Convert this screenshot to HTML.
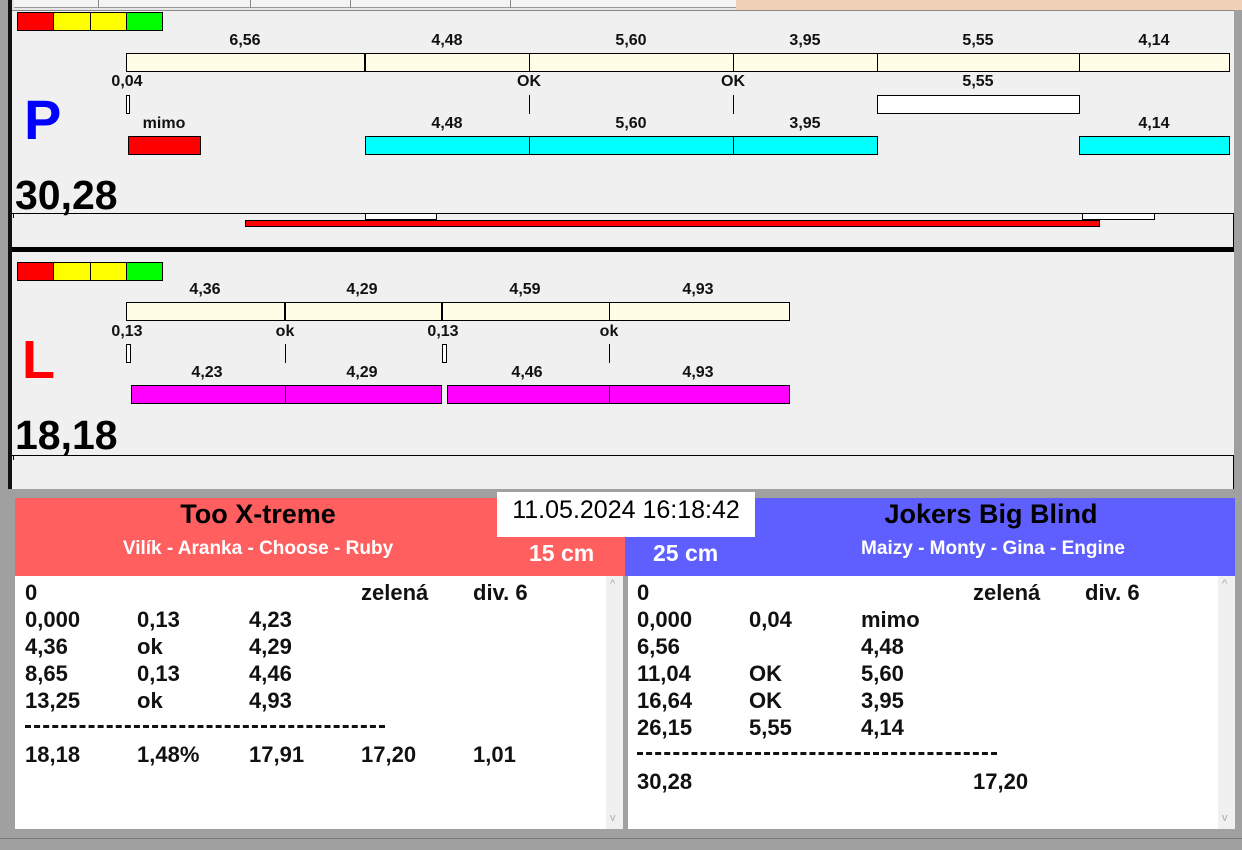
<!DOCTYPE html><html><head><meta charset="utf-8"><style>
*{margin:0;padding:0;box-sizing:border-box}
body{width:1242px;height:850px;background:#f0f0f0;position:relative;overflow:hidden;font-family:"Liberation Sans",sans-serif}
div{position:absolute}
.l{font-weight:bold;font-size:16px;line-height:15px;transform:translateX(-50%);white-space:nowrap;color:#111}
.b{border:1px solid #000}
.cr{background:#fffde6}
.cy{background:#00ffff}
.mg{background:#ff00ff}
.v{width:1px;background:#000}
.t{font-family:"Liberation Sans Narrow","Liberation Sans",sans-serif;font-weight:bold;font-size:22px;line-height:27px;color:#111;white-space:nowrap}
.big{font-weight:bold;font-size:41px;line-height:40px;color:#000}
</style></head><body>
<div style="left:0;top:0;width:1242px;height:10px;background:#e6e6e6"></div>
<div style="left:14px;top:0;width:722px;height:8px;background:#f4f4f4;border-bottom:1px solid #999"></div>
<div style="left:98px;top:0;width:1px;height:8px;background:#888"></div>
<div style="left:250px;top:0;width:1px;height:8px;background:#888"></div>
<div style="left:350px;top:0;width:1px;height:8px;background:#888"></div>
<div style="left:510px;top:0;width:1px;height:8px;background:#888"></div>
<div style="left:736px;top:0;width:506px;height:11px;background:#f0d0b6"></div>
<div style="left:0;top:0;width:12px;height:850px;background:#a0a0a0"></div>
<div style="left:8px;top:0;width:4px;height:492px;background:#111"></div>
<div style="left:1234px;top:10px;width:8px;height:480px;background:#a0a0a0"></div>
<div style="left:12px;top:10px;width:1222px;height:1px;background:#888"></div>

<div class="b" style="left:17px;top:12px;width:37px;height:19px;background:#f00"></div>
<div class="b" style="left:53px;top:12px;width:38px;height:19px;background:#ff0"></div>
<div class="b" style="left:90px;top:12px;width:37px;height:19px;background:#ff0"></div>
<div class="b" style="left:126px;top:12px;width:37px;height:19px;background:#0f0"></div>

<div class="l" style="left:245px;top:33px">6,56</div>
<div class="l" style="left:447px;top:33px">4,48</div>
<div class="l" style="left:631px;top:33px">5,60</div>
<div class="l" style="left:805px;top:33px">3,95</div>
<div class="l" style="left:978px;top:33px">5,55</div>
<div class="l" style="left:1154px;top:33px">4,14</div>
<div class="b cr" style="left:126px;top:53px;width:1104px;height:19px"></div>
<div style="left:364px;top:53px;width:2px;height:19px;background:#000"></div>
<div class="v" style="left:529px;top:53px;height:19px"></div>
<div class="v" style="left:733px;top:53px;height:19px"></div>
<div class="v" style="left:877px;top:53px;height:19px"></div>
<div class="v" style="left:1079px;top:53px;height:19px"></div>

<div class="l" style="left:127px;top:74px">0,04</div>
<div class="l" style="left:529px;top:74px">OK</div>
<div class="l" style="left:733px;top:74px">OK</div>
<div class="l" style="left:978px;top:74px">5,55</div>
<div class="b" style="left:126px;top:95px;width:4px;height:19px;background:#fff"></div>
<div class="v" style="left:529px;top:95px;height:19px"></div>
<div class="v" style="left:733px;top:95px;height:19px"></div>
<div class="b" style="left:877px;top:95px;width:203px;height:19px;background:#fff"></div>

<div style="left:24px;top:92px;font-weight:bold;font-size:56px;line-height:56px;color:#0000ff">P</div>
<div class="l" style="left:164px;top:116px">mimo</div>
<div class="l" style="left:447px;top:116px">4,48</div>
<div class="l" style="left:631px;top:116px">5,60</div>
<div class="l" style="left:805px;top:116px">3,95</div>
<div class="l" style="left:1154px;top:116px">4,14</div>
<div class="b" style="left:128px;top:136px;width:73px;height:19px;background:#f00"></div>
<div class="b cy" style="left:365px;top:136px;width:513px;height:19px"></div>
<div class="v" style="left:529px;top:136px;height:19px"></div>
<div class="v" style="left:733px;top:136px;height:19px"></div>
<div class="b cy" style="left:1079px;top:136px;width:151px;height:19px"></div>

<div class="big" style="left:15px;top:175px">30,28</div>
<div style="left:12px;top:213px;width:1222px;height:35px;border-top:1px solid #000;border-right:1px solid #000"></div>
<div style="left:13px;top:213px;width:1px;height:5px;background:#000"></div>
<div class="b" style="left:365px;top:213px;width:72px;height:7px;background:#fff"></div>
<div class="b" style="left:1082px;top:213px;width:73px;height:7px;background:#fff"></div>
<div class="b" style="left:245px;top:220px;width:855px;height:7px;background:#f00"></div>
<div style="left:12px;top:247px;width:1222px;height:5px;background:#000"></div>

<div class="b" style="left:17px;top:262px;width:37px;height:19px;background:#f00"></div>
<div class="b" style="left:53px;top:262px;width:38px;height:19px;background:#ff0"></div>
<div class="b" style="left:90px;top:262px;width:37px;height:19px;background:#ff0"></div>
<div class="b" style="left:126px;top:262px;width:37px;height:19px;background:#0f0"></div>

<div class="l" style="left:205px;top:282px">4,36</div>
<div class="l" style="left:362px;top:282px">4,29</div>
<div class="l" style="left:525px;top:282px">4,59</div>
<div class="l" style="left:698px;top:282px">4,93</div>
<div class="b cr" style="left:126px;top:302px;width:664px;height:19px"></div>
<div style="left:284px;top:302px;width:2px;height:19px;background:#000"></div>
<div style="left:441px;top:302px;width:2px;height:19px;background:#000"></div>
<div class="v" style="left:609px;top:302px;height:19px"></div>

<div class="l" style="left:127px;top:324px">0,13</div>
<div class="l" style="left:285px;top:324px">ok</div>
<div class="l" style="left:443px;top:324px">0,13</div>
<div class="l" style="left:609px;top:324px">ok</div>
<div class="b" style="left:126px;top:344px;width:5px;height:19px;background:#fff"></div>
<div class="v" style="left:285px;top:344px;height:19px"></div>
<div class="b" style="left:442px;top:344px;width:5px;height:19px;background:#fff"></div>
<div class="v" style="left:609px;top:344px;height:19px"></div>

<div style="left:22px;top:333px;font-weight:bold;font-size:54px;line-height:54px;color:#f00">L</div>
<div class="l" style="left:207px;top:365px">4,23</div>
<div class="l" style="left:362px;top:365px">4,29</div>
<div class="l" style="left:527px;top:365px">4,46</div>
<div class="l" style="left:698px;top:365px">4,93</div>
<div class="b mg" style="left:131px;top:385px;width:311px;height:19px"></div>
<div class="v" style="left:285px;top:385px;height:19px"></div>
<div class="b mg" style="left:447px;top:385px;width:343px;height:19px"></div>
<div class="v" style="left:609px;top:385px;height:19px"></div>

<div class="big" style="left:15px;top:415px">18,18</div>
<div style="left:12px;top:455px;width:1222px;height:35px;border-top:1px solid #000;border-right:1px solid #000"></div>
<div style="left:13px;top:455px;width:1px;height:5px;background:#000"></div>

<div style="left:0;top:489px;width:1242px;height:361px;background:#a0a0a0"></div>
<div style="left:15px;top:498px;width:610px;height:78px;background:#ff5f5f"></div>
<div style="left:625px;top:498px;width:610px;height:78px;background:#5f5fff"></div>
<div style="left:497px;top:492px;width:258px;height:45px;background:#fff"></div>
<div style="left:497px;top:494px;width:258px;text-align:center;font-size:25px;line-height:32px;color:#000">11.05.2024 16:18:42</div>
<div class="t" style="left:15px;top:499px;width:486px;text-align:center;font-size:27px;line-height:30px;color:#000">Too X-treme</div>
<div class="t" style="left:15px;top:537px;width:486px;text-align:center;font-size:19px;line-height:24px;color:#fff">Vilík - Aranka - Choose - Ruby</div>
<div class="t" style="left:529px;top:540px;font-size:23px;line-height:26px;color:#fff">15 cm</div>
<div class="t" style="left:653px;top:540px;font-size:23px;line-height:26px;color:#fff">25 cm</div>
<div class="t" style="left:755px;top:499px;width:472px;text-align:center;font-size:27px;line-height:30px;color:#000">Jokers Big Blind</div>
<div class="t" style="left:755px;top:537px;width:476px;text-align:center;font-size:19px;line-height:24px;color:#fff">Maizy - Monty - Gina - Engine</div>

<div style="left:15px;top:576px;width:592px;height:253px;background:#fff"></div>
<div style="left:606px;top:576px;width:17px;height:253px;background:#f0f0f0;color:#aaa;font-size:11px;text-align:center">
<div style="left:4px;top:2px">^</div><div style="left:4px;top:236px">v</div></div>
<div style="left:628px;top:576px;width:591px;height:253px;background:#fff"></div>
<div style="left:1218px;top:576px;width:17px;height:253px;background:#f0f0f0;color:#aaa;font-size:11px">
<div style="left:4px;top:2px">^</div><div style="left:4px;top:236px">v</div></div>
<div style="left:0;top:838px;width:1242px;height:1px;background:#777"></div>

<div class="t" style="left:25px;top:579px">0</div>
<div class="t" style="left:361px;top:579px">zelená</div>
<div class="t" style="left:473px;top:579px">div. 6</div>
<div class="t" style="left:25px;top:606px">0,000</div><div class="t" style="left:137px;top:606px">0,13</div><div class="t" style="left:249px;top:606px">4,23</div>
<div class="t" style="left:25px;top:633px">4,36</div><div class="t" style="left:137px;top:633px">ok</div><div class="t" style="left:249px;top:633px">4,29</div>
<div class="t" style="left:25px;top:660px">8,65</div><div class="t" style="left:137px;top:660px">0,13</div><div class="t" style="left:249px;top:660px">4,46</div>
<div class="t" style="left:25px;top:687px">13,25</div><div class="t" style="left:137px;top:687px">ok</div><div class="t" style="left:249px;top:687px">4,93</div>
<div style="left:25px;top:725px;width:360px;height:0;border-top:3px dashed #111"></div>
<div class="t" style="left:25px;top:741px">18,18</div><div class="t" style="left:137px;top:741px">1,48%</div><div class="t" style="left:249px;top:741px">17,91</div><div class="t" style="left:361px;top:741px">17,20</div><div class="t" style="left:473px;top:741px">1,01</div>

<div class="t" style="left:637px;top:579px">0</div>
<div class="t" style="left:973px;top:579px">zelená</div>
<div class="t" style="left:1085px;top:579px">div. 6</div>
<div class="t" style="left:637px;top:606px">0,000</div><div class="t" style="left:749px;top:606px">0,04</div><div class="t" style="left:861px;top:606px">mimo</div>
<div class="t" style="left:637px;top:633px">6,56</div><div class="t" style="left:861px;top:633px">4,48</div>
<div class="t" style="left:637px;top:660px">11,04</div><div class="t" style="left:749px;top:660px">OK</div><div class="t" style="left:861px;top:660px">5,60</div>
<div class="t" style="left:637px;top:687px">16,64</div><div class="t" style="left:749px;top:687px">OK</div><div class="t" style="left:861px;top:687px">3,95</div>
<div class="t" style="left:637px;top:714px">26,15</div><div class="t" style="left:749px;top:714px">5,55</div><div class="t" style="left:861px;top:714px">4,14</div>
<div style="left:637px;top:752px;width:360px;height:0;border-top:3px dashed #111"></div>
<div class="t" style="left:637px;top:768px">30,28</div><div class="t" style="left:973px;top:768px">17,20</div>
</body></html>
